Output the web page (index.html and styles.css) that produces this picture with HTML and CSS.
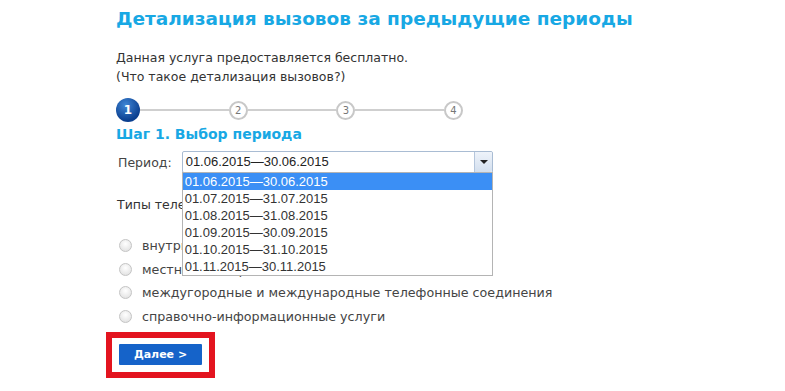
FILE: index.html
```html
<!DOCTYPE html>
<html lang="ru">
<head>
    <meta charset="UTF-8">
    <title>Детализация вызовов</title>
    <link rel="stylesheet" href="styles.css">
</head>
<body>
    <div class="page">
        <h1>Детализация вызовов за предыдущие периоды</h1>
        <p class="intro">Данная услуга предоставляется бесплатно.<br>(Что такое детализация вызовов?)</p>

        <div class="steps">
            <span class="step active">1</span>
            <span class="step-line"></span>
            <span class="step">2</span>
            <span class="step-line"></span>
            <span class="step">3</span>
            <span class="step-line"></span>
            <span class="step">4</span>
        </div>
        <h2>Шаг 1. Выбор периода</h2>

        <div class="period-row">
            <span class="label">Период:</span>
            <div class="select">
                <div class="select-box">
                    <span class="select-value">01.06.2015—30.06.2015</span>
                    <span class="select-arrow"></span>
                </div>
                <ul class="select-list">
                    <li class="selected">01.06.2015—30.06.2015</li>
                    <li>01.07.2015—31.07.2015</li>
                    <li>01.08.2015—31.08.2015</li>
                    <li>01.09.2015—30.09.2015</li>
                    <li>01.10.2015—31.10.2015</li>
                    <li>01.11.2015—30.11.2015</li>
                </ul>
            </div>
        </div>

        <p class="types">Типы телефонных соединений:</p>
        <ul class="radios">
            <li><span class="radio"></span>внутризоновые телефонные соединения</li>
            <li><span class="radio"></span>местные телефонные соединения</li>
            <li><span class="radio"></span>междугородные и международные телефонные соединения</li>
            <li><span class="radio"></span>справочно-информационные услуги</li>
        </ul>

        <div class="highlight">
            <button class="next">Далее &gt;</button>
        </div>
    </div>
</body>
</html>
```

FILE: styles.css
```css
body {
    margin: 0;
    background: #fff;
    font-family: "DejaVu Sans", Verdana, sans-serif;
    color: #333;
}

.page {
    padding: 6px 0 0 116px;
}

h1 {
    margin: 0;
    font-size: 18.5px;
    font-weight: bold;
    color: #18a8e4;
    line-height: 26px;
}

.intro {
    margin: 16px 0 0 0;
    font-size: 12.5px;
    line-height: 19px;
}

.steps {
    display: flex;
    align-items: center;
    margin-top: 12px;
    width: 347px;
}

.step {
    width: 15px;
    height: 15px;
    border: 2px solid #c8c8c8;
    border-radius: 50%;
    background: #fff;
    color: #777;
    font-size: 10px;
    line-height: 15px;
    text-align: center;
    flex-shrink: 0;
}

.step.active {
    width: 24px;
    height: 24px;
    border: none;
    line-height: 24px;
    background: radial-gradient(circle at 40% 30%, #3f86d6, #0b3f8f 70%);
    color: #fff;
    font-weight: bold;
    font-size: 12px;
}

.step-line {
    flex: 1;
    height: 2px;
    background: #cfcfcf;
}

h2 {
    margin: 3px 0 0 0;
    font-size: 14px;
    font-weight: bold;
    color: #18a8e4;
    line-height: 18px;
}

.period-row {
    display: flex;
    align-items: center;
    gap: 10px;
    margin-top: 8px;
}

.label {
    font-size: 12.5px;
    color: #444;
    padding-left: 2px;
}

.select {
    position: relative;
    width: 311px;
}

.select-box {
    display: flex;
    height: 20px;
    border: 1px solid #a9bcd3;
    border-radius: 2px;
    background: #fff;
}

.select-value {
    flex: 1;
    font-family: "Liberation Sans", Arial, sans-serif;
    font-size: 13px;
    line-height: 20px;
    color: #222;
    padding-left: 3px;
}

.select-arrow {
    position: relative;
    width: 17px;
    border-left: 1px solid #b5c6dc;
    background: linear-gradient(#eef3fa, #d3dfee);
    border-radius: 0 2px 2px 0;
}

.select-arrow::after {
    content: "";
    position: absolute;
    left: 5px;
    top: 8px;
    border-left: 4px solid transparent;
    border-right: 4px solid transparent;
    border-top: 4px solid #222;
}

.select-list {
    position: absolute;
    left: 0;
    top: 21px;
    width: 309px;
    margin: 0;
    padding: 0;
    list-style: none;
    background: #fff;
    border: 1px solid #b4b4b4;
    z-index: 2;
}

.select-list li {
    font-family: "Liberation Sans", Arial, sans-serif;
    font-size: 13px;
    line-height: 17px;
    color: #333;
    padding-left: 2px;
}

.select-list li.selected {
    background: #3b8ff5;
    color: #fff;
}

.types {
    margin: 24px 0 0 0;
    font-size: 12.5px;
    line-height: 16px;
    padding-left: 1px;
}

.radios {
    list-style: none;
    margin: 21px 0 0 0;
    padding: 0;
}

.radios li {
    display: flex;
    align-items: center;
    gap: 10px;
    height: 23.6px;
    font-size: 12.7px;
    color: #444;
    padding-left: 3px;
}

.radio {
    width: 11px;
    height: 11px;
    border-radius: 50%;
    border: 1px solid #c4c4c4;
    background: radial-gradient(circle at 50% 35%, #fff, #dcdcdc);
    flex-shrink: 0;
}

.highlight {
    display: inline-block;
    margin: 4px 0 0 -10px;
    padding: 6px 7px 7px 7px;
    border: 6px solid #e3141f;
}

.next {
    display: block;
    width: 83px;
    height: 21px;
    border: none;
    border-radius: 1px;
    background: #1563c9;
    color: #fff;
    font-family: "DejaVu Sans", Verdana, sans-serif;
    font-size: 11px;
    font-weight: bold;
    padding: 0;
}
```
